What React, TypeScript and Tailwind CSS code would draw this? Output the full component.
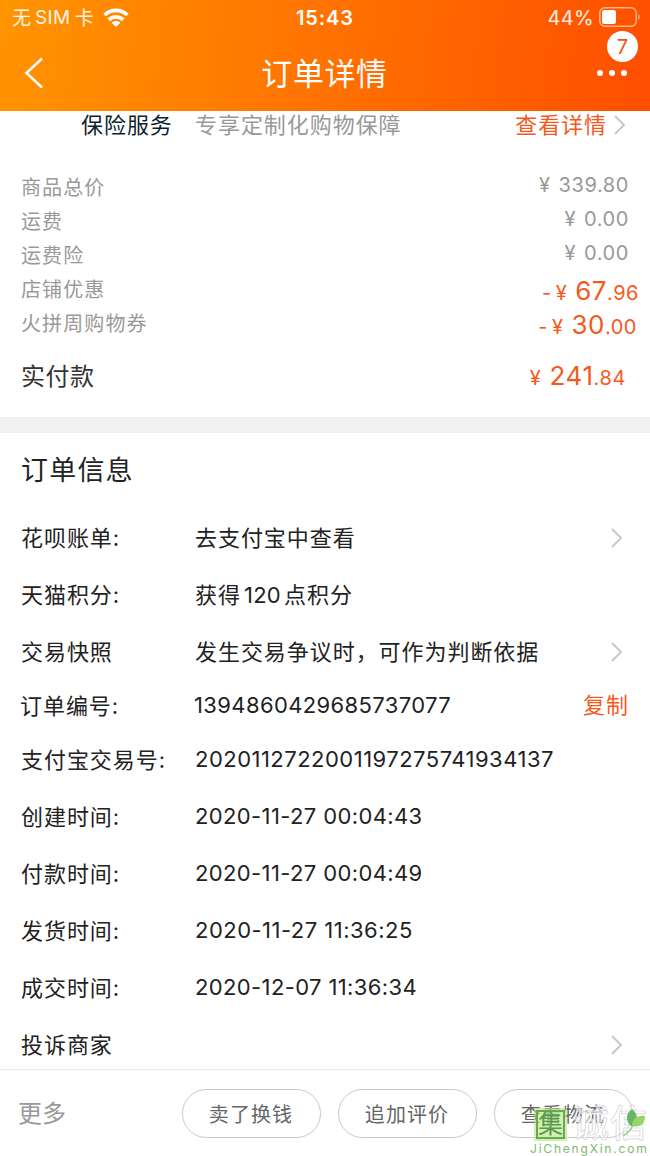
import clsx from "clsx";

const costs = [
  { name: "商品总价", value: "339.80" },
  { name: "运费", value: "0.00" },
  { name: "运费险", value: "0.00" },
];

const discounts = [
  { name: "店铺优惠", whole: "67", cents: ".96", pad: "pr-[11px]" },
  { name: "火拼周购物券", whole: "30", cents: ".00", pad: "pr-[13px]" },
];

const orderInfo = [
  { label: "花呗账单:", value: "去支付宝中查看", arrow: true },
  { label: "天猫积分:", value: "获得120点积分", points: true },
  { label: "交易快照", value: "发生交易争议时，可作为判断依据", arrow: true },
  { label: "订单编号:", value: "1394860429685737077", copy: true },
  { label: "支付宝交易号:", value: "2020112722001197275741934137", spacing: "tracking-[0.48px]" },
  { label: "创建时间:", value: "2020-11-27 00:04:43" },
  { label: "付款时间:", value: "2020-11-27 00:04:49" },
  { label: "发货时间:", value: "2020-11-27 11:36:25", spacing: "tracking-[0.48px]" },
  { label: "成交时间:", value: "2020-12-07 11:36:34" },
  { label: "投诉商家", value: "", arrow: true },
];

function Chevron() {
  return (
    <svg width="12" height="20" viewBox="0 0 12 20" fill="none" stroke="#c8c8c8" strokeWidth="2">
      <path d="M1 1 L10 10 L1 19" />
    </svg>
  );
}

function Header() {
  return (
    <header className="h-[111px] bg-linear-[97deg,#ff9400,#ff7200_50%,#ff4e00] text-white">
      <div className="grid h-9 grid-cols-3 items-center">
        <div className="flex items-center pl-3 text-[19px] text-white/90">
          <span className="pt-[2px]">无</span>
          <span className="ml-1 tracking-[0.4px]">SIM</span>
          <span className="ml-1 pt-[2px]">卡</span>
          <svg className="ml-[9px]" width="26" height="20" viewBox="0 0 26 20" fill="none" stroke="#fff" strokeWidth="3.7">
            <path d="M1.6 7 C8 0.7 18 0.7 24.4 7" />
            <path d="M5.8 11.8 C10 7.8 16 7.8 20.2 11.8" />
            <path d="M13 19 L8.6 14.7 C11 12.4 15 12.4 17.4 14.7 Z" fill="#fff" stroke="none" />
          </svg>
        </div>
        <div className="text-center text-[20px] font-semibold tracking-[0.9px]">15:43</div>
        <div className="flex items-center justify-end pr-[10px] text-[20px] tracking-[0.3px] text-white/90">
          <span>44%</span>
          <svg className="-mt-[2px] ml-[5px]" width="41" height="20" viewBox="0 0 41 20">
            <rect x="0.8" y="0.8" width="36.4" height="18.4" rx="5" fill="none" stroke="#ffb888" strokeWidth="1.5" />
            <rect x="3" y="3" width="14" height="14" rx="2.5" fill="#fff" />
            <path d="M39.2 7 C41 8 41 12 39.2 13 Z" fill="#ffb888" />
          </svg>
        </div>
      </div>
      <div className="flex h-[74px] items-center justify-between pr-[23px] pl-6">
        <svg width="20" height="32" viewBox="0 0 20 32" fill="none" stroke="#fff" strokeWidth="2.5">
          <path d="M18 1.5 L2.5 16 L18 30.5" />
        </svg>
        <h1 className="pt-[2px] pl-2 text-[31px] tracking-[0.6px]">订单详情</h1>
        <div className="relative flex gap-[6px]">
          <i className="size-[6px] rounded-full bg-white" />
          <i className="size-[6px] rounded-full bg-white" />
          <i className="size-[6px] rounded-full bg-white" />
          <span className="absolute -top-[39px] left-[10px] flex size-[31px] items-center justify-center rounded-full bg-white text-[20px] text-[#e8571a]">7</span>
        </div>
      </div>
    </header>
  );
}

function Watermark() {
  return (
    <div className="absolute top-[1106px] left-[530px] w-[120px]">
      <div className="flex h-9 items-center">
        <div className="ml-1 flex size-[33px] items-center justify-center bg-[#b5e67a]/60">
          <span className="flex size-[29px] items-center justify-center border-2 border-[#65a957] text-[25px] leading-none text-[#579b51]">集</span>
        </div>
        <span className="ml-[5px] text-[37px] leading-9 font-medium tracking-[1px] whitespace-nowrap text-white/60 [-webkit-text-stroke:0.7px_#d2d2d2]">诚信</span>
      </div>
      <svg className="absolute top-[2px] left-[93px]" width="27" height="30" viewBox="0 0 27 30">
        <path d="M8 18 C2 13 3 5 9 1 C15 6 16 12 9 18 Z" fill="#65b668" />
        <path d="M9 18 C9 11 14 7 22 8 C22 16 17 20 9 18 Z" fill="#9ad466" />
        <path d="M10 17 Q7 24 0 28" fill="none" stroke="#87c978" strokeWidth="1.2" />
      </svg>
      <div className="text-[12px] leading-[14px] tracking-[1.8px] whitespace-nowrap text-[#7dba69]">JiChengXin.com</div>
    </div>
  );
}

export default function App() {
  return (
    <div className="relative h-[1156px] w-[650px] overflow-hidden bg-white font-[Inter,'Noto_Sans_CJK_SC',sans-serif] text-[#222]">
      <Header />

      <div className="flex h-7 items-center pr-6 pl-[81px] text-[22px] tracking-[0.95px]">
        <span className="w-[114px] text-[#0f1f2e]">保险服务</span>
        <span className="flex-1 text-[#999]">专享定制化购物保障</span>
        <span className="mr-[7px] text-[#f5591c]">查看详情</span>
        <Chevron />
      </div>

      <section className="h-[278px] pt-[30px] pl-[21px]">
        {costs.map((item) => (
          <div key={item.name} className="flex h-[34px] items-center justify-between pr-[21px] text-[20px] tracking-[1.1px] text-[#999]">
            <span className="pt-[3px]">{item.name}</span>
            <span className="pb-[3px] tracking-[0.6px]"><span className="mr-2">¥</span>{item.value}</span>
          </div>
        ))}
        {discounts.map((item) => (
          <div key={item.name} className={clsx("flex h-[34px] items-center justify-between", item.pad)}>
            <span className="pt-[3px] text-[20px] tracking-[1.1px] text-[#999]">{item.name}</span>
            <span className="pt-1 text-[20px] tracking-[0.5px] text-[#f5591c]">
              -<span className="mr-2 ml-1">¥</span><span className="text-[26px]">{item.whole}</span>{item.cents}
            </span>
          </div>
        ))}
        <div className="mt-[18px] flex h-[38px] items-center justify-between pr-6">
          <span className="pt-[2px] text-[24px] tracking-[0.5px] text-[#333]">实付款</span>
          <span className="pb-[2px] text-[20px] tracking-[0.6px] text-[#f5591c]">
            <span className="mr-2">¥</span><span className="text-[26px]">241</span>.84
          </span>
        </div>
      </section>

      <div className="h-4 bg-[#f1f1f1]" />

      <section className="h-[636px] pl-[21px]">
        <h2 className="h-[76px] text-[27px] leading-[75px] tracking-[1.2px]">订单信息</h2>
        {orderInfo.map((row) => (
          <div key={row.label} className={clsx("flex items-center text-[22px] tracking-[0.95px]", row.copy ? "-ml-px h-[51px]" : "h-[57px]")}>
            <span className="w-[174px] pt-px">{row.label}</span>
            <span className={clsx("flex-1 whitespace-nowrap", row.spacing ?? (/^\d/.test(row.value) ? "tracking-[0.38px]" : "pt-px"))}>
              {row.points ? <>获得<span className="mx-[3px] tracking-[0.3px]">120</span>点积分</> : row.value}
            </span>
            {row.copy && <span className="mr-[21px] text-[#f5591c]">复制</span>}
            {row.arrow && <span className="mr-[27px]"><Chevron /></span>}
          </div>
        ))}
      </section>

      <footer className="flex h-[88px] items-center border-t border-[#e8e8e8] pr-[17px] pl-[18px]">
        <span className="flex-1 pt-px text-[24px] text-[#999]">更多</span>
        <div className="flex gap-[17px] text-[20px] tracking-[1.1px] text-[#666]">
          <button className="h-[49px] w-[139px] rounded-full border border-[#c8c8c8] pt-[2px] pr-px">卖了换钱</button>
          <button className="h-[49px] w-[139px] rounded-full border border-[#c8c8c8] pt-[2px] pr-px">追加评价</button>
          <button className="h-[49px] w-[139px] rounded-full border border-[#c8c8c8] pt-[2px] pr-px">查看物流</button>
        </div>
      </footer>
      <Watermark />
    </div>
  );
}
